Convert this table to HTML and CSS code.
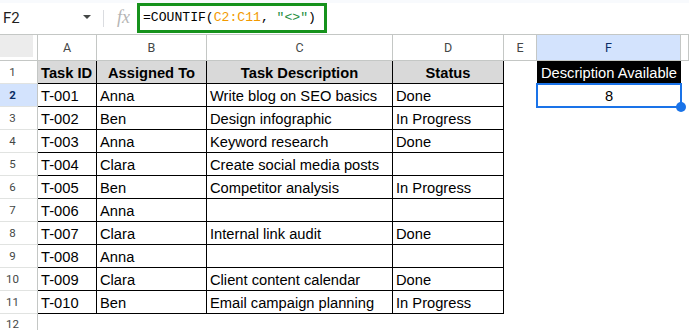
FILE: index.html
```html
<!DOCTYPE html>
<html>
<head>
<meta charset="utf-8">
<link rel="stylesheet" href="styles.css">
</head>
<body>
<div class="toolbar">
  <div class="namebox"><span class="name">F2</span><span class="caret"></span></div>
  <div class="sep"></div>
  <div class="fx">fx</div>
  <div class="formula"><span>=COUNTIF(</span><span class="ref">C2:C11</span><span>, </span><span class="str">"&lt;&gt;"</span><span>)</span></div>
</div>
<div class="grid">
  <div class="corner"><div class="corner-fill"></div></div>
  <div class="ch">A</div><div class="ch">B</div><div class="ch">C</div><div class="ch">D</div><div class="ch">E</div><div class="ch sel">F</div><div class="ch"></div>

  <div class="rh">1</div>
  <div class="t th">Task ID</div><div class="t th center">Assigned To</div><div class="t th center">Task Description</div><div class="t th center">Status</div><div class="c"></div><div class="c dark">Description Available</div><div class="c"></div>

  <div class="rh sel">2</div>
  <div class="t">T-001</div><div class="t">Anna</div><div class="t">Write blog on SEO basics</div><div class="t">Done</div><div class="c"></div><div class="c active">8</div><div class="c"></div>

  <div class="rh">3</div>
  <div class="t">T-002</div><div class="t">Ben</div><div class="t">Design infographic</div><div class="t">In Progress</div><div class="c"></div><div class="c"></div><div class="c"></div>

  <div class="rh">4</div>
  <div class="t">T-003</div><div class="t">Anna</div><div class="t">Keyword research</div><div class="t">Done</div><div class="c"></div><div class="c"></div><div class="c"></div>

  <div class="rh">5</div>
  <div class="t">T-004</div><div class="t">Clara</div><div class="t">Create social media posts</div><div class="t"></div><div class="c"></div><div class="c"></div><div class="c"></div>

  <div class="rh">6</div>
  <div class="t">T-005</div><div class="t">Ben</div><div class="t">Competitor analysis</div><div class="t">In Progress</div><div class="c"></div><div class="c"></div><div class="c"></div>

  <div class="rh">7</div>
  <div class="t">T-006</div><div class="t">Anna</div><div class="t"></div><div class="t"></div><div class="c"></div><div class="c"></div><div class="c"></div>

  <div class="rh">8</div>
  <div class="t">T-007</div><div class="t">Clara</div><div class="t">Internal link audit</div><div class="t">Done</div><div class="c"></div><div class="c"></div><div class="c"></div>

  <div class="rh">9</div>
  <div class="t">T-008</div><div class="t">Anna</div><div class="t"></div><div class="t"></div><div class="c"></div><div class="c"></div><div class="c"></div>

  <div class="rh">10</div>
  <div class="t">T-009</div><div class="t">Clara</div><div class="t">Client content calendar</div><div class="t">Done</div><div class="c"></div><div class="c"></div><div class="c"></div>

  <div class="rh">11</div>
  <div class="t">T-010</div><div class="t">Ben</div><div class="t">Email campaign planning</div><div class="t">In Progress</div><div class="c"></div><div class="c"></div><div class="c"></div>

  <div class="rh last">12</div>
  <div class="c"></div><div class="c"></div><div class="c"></div><div class="c"></div><div class="c"></div><div class="c"></div><div class="c"></div>
</div>
</body>
</html>
```
FILE: styles.css
```css
html, body {
  margin: 0;
  padding: 0;
  background: #fff;
}
body {
  width: 689px;
  height: 330px;
  overflow: hidden;
  font-family: "Liberation Sans", Arial, sans-serif;
}
.toolbar {
  height: 35px;
  box-sizing: border-box;
  border-bottom: 1px solid #c4c7c5;
  background: linear-gradient(#f8fafd 0, #f8fafd 3px, #fff 3px);
  display: flex;
  align-items: flex-start;
}
.namebox {
  width: 103px;
  height: 34px;
  display: flex;
  align-items: center;
  box-sizing: border-box;
  padding-left: 3px;
}
.name {
  font-family: Roboto, "Liberation Sans", sans-serif;
  font-size: 15px;
  color: #1f1f1f;
  flex: 1;
  padding-top: 1px;
}
.caret {
  width: 0;
  height: 0;
  border-left: 4px solid transparent;
  border-right: 4px solid transparent;
  border-top: 4px solid #444746;
  margin-right: 12px;
}
.sep {
  width: 1px;
  height: 17px;
  margin-top: 10px;
  background: #dadce0;
}
.fx {
  width: 33px;
  height: 34px;
  box-sizing: border-box;
  padding-left: 13px;
  font-family: "Liberation Serif", serif;
  font-style: italic;
  font-size: 18px;
  line-height: 34px;
  color: #b5b5b5;
}
.formula {
  margin-top: 3px;
  width: 190px;
  height: 30px;
  box-sizing: border-box;
  border: 3px solid #16921c;
  padding-left: 3px;
  font-family: "Liberation Mono", "DejaVu Sans Mono", monospace;
  font-size: 13.1px;
  line-height: 24px;
  color: #000;
  white-space: pre;
}
.formula .ref { color: #f29a00; }
.formula .str { color: #1e8e3e; }

.grid {
  display: grid;
  grid-template-columns: 38px 59px 110px 186px 111px 33px 144px 1fr;
  grid-template-rows: 26px repeat(11, 23px) 17px;
}
.grid > div {
  box-sizing: border-box;
  white-space: nowrap;
  overflow: hidden;
}
.corner {
  border-right: 1px solid #c4c7c5;
  border-bottom: 1px solid #c4c7c5;
}
.corner-fill {
  width: 33px;
  height: 22px;
  background: #ececec;
}
.ch {
  border-right: 1px solid #c4c7c5;
  border-bottom: 1px solid #c4c7c5;
  font-family: Roboto, "Liberation Sans", sans-serif;
  font-size: 12.5px;
  color: #444746;
  text-align: center;
  line-height: 25px;
}
.ch.sel {
  background: #d3e3fd;
  color: #0b2e66;
}
.rh {
  border-right: 1px solid #c4c7c5;
  border-bottom: 1px solid #e1e3e1;
  font-family: Roboto, "Liberation Sans", sans-serif;
  font-size: 11.5px;
  color: #444746;
  text-align: center;
  padding-right: 12px;
  line-height: 22px;
}
.rh.last {
  border-bottom: none;
  line-height: 12px;
  padding-top: 4px;
}
.rh.sel {
  background: #d3e3fd;
  color: #0b2e66;
  font-weight: bold;
}
.t {
  border-right: 1px solid #000;
  border-bottom: 1px solid #000;
  font-size: 14.7px;
  color: #000;
  line-height: 24px;
  padding-left: 3px;
}
.th {
  background: #d9d9d9;
  font-weight: bold;
}
.center {
  text-align: center;
  padding-left: 0;
}
.c {
  font-size: 14.7px;
  line-height: 24px;
  color: #000;
}
.dark {
  background: #000;
  color: #fff;
  text-align: center;
}
.active {
  position: relative;
  overflow: visible !important;
  text-align: center;
  outline: 2px solid #1a73e8;
  outline-offset: -1px;
}
.active::after {
  content: "";
  position: absolute;
  right: -5px;
  bottom: -5px;
  width: 10px;
  height: 10px;
  border-radius: 50%;
  background: #1a73e8;
}
```
